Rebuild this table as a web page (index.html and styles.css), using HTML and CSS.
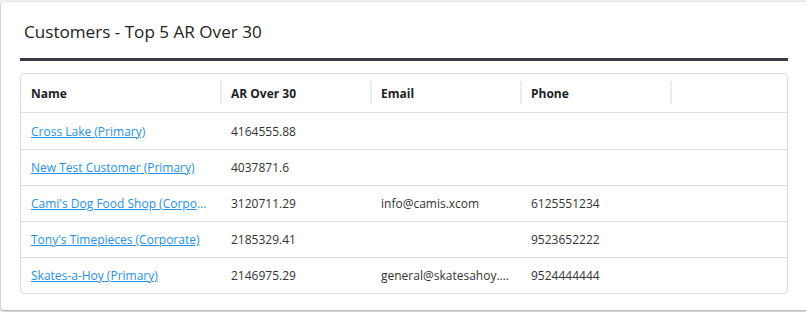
FILE: index.html
```html
<!DOCTYPE html>
<html lang="en">
<head>
<meta charset="utf-8">
<title>Customers - Top 5 AR Over 30</title>
<link rel="stylesheet" href="styles.css">
</head>
<body>
<div class="card">
  <div class="card-header">
    <h2 class="title">Customers - Top 5 AR Over 30</h2>
  </div>
  <div class="grid">
    <div class="row head">
      <div class="cell">Name</div>
      <div class="cell sep">AR Over 30</div>
      <div class="cell sep">Email</div>
      <div class="cell sep">Phone</div>
      <div class="cell sep"></div>
    </div>
    <div class="row first">
      <div class="cell"><a href="#" class="link">Cross Lake (Primary)</a></div>
      <div class="cell">4164555.88</div>
      <div class="cell"></div>
      <div class="cell"></div>
      <div class="cell"></div>
    </div>
    <div class="row">
      <div class="cell"><a href="#" class="link">New Test Customer (Primary)</a></div>
      <div class="cell">4037871.6</div>
      <div class="cell"></div>
      <div class="cell"></div>
      <div class="cell"></div>
    </div>
    <div class="row">
      <div class="cell"><a href="#" class="link">Cami's Dog Food Shop (Corporate)</a></div>
      <div class="cell">3120711.29</div>
      <div class="cell">info@camis.xcom</div>
      <div class="cell">6125551234</div>
      <div class="cell"></div>
    </div>
    <div class="row">
      <div class="cell"><a href="#" class="link">Tony's Timepieces (Corporate)</a></div>
      <div class="cell">2185329.41</div>
      <div class="cell"></div>
      <div class="cell">9523652222</div>
      <div class="cell"></div>
    </div>
    <div class="row last">
      <div class="cell"><a href="#" class="link">Skates-a-Hoy (Primary)</a></div>
      <div class="cell">2146975.29</div>
      <div class="cell">general@skatesahoy.com</div>
      <div class="cell">9524444444</div>
      <div class="cell"></div>
    </div>
  </div>
</div>
</body>
</html>
```

FILE: styles.css
```css
html, body {
  margin: 0;
  padding: 0;
}
body {
  background: #f1f1f1;
  font-family: "Open Sans", "Liberation Sans", sans-serif;
  overflow: hidden;
  width: 806px;
  height: 312px;
}
.card {
  margin: 2px 0 0 1px;
  width: 820px;
  box-sizing: border-box;
  padding: 18px 33px 16px 19px;
  background: #fff;
  border-radius: 4px;
  box-shadow: 0 1px 3px rgba(0, 0, 0, 0.35);
}
.card-header {
  border-bottom: 3px solid #3c3c46;
  padding: 0 0 14px 4px;
}
.title {
  margin: 0;
  font-size: 17.1px;
  line-height: 24px;
  font-weight: 400;
  color: #222;
}
.grid {
  margin-top: 12px;
  border: 1px solid #dedede;
  border-radius: 4px;
  overflow: hidden;
}
.row {
  display: grid;
  grid-template-columns: 199px 150px 150px 150px 1fr;
  height: 35px;
  border-bottom: 1px solid #dedede;
  font-size: 12px;
  color: #333;
}
.row.first {
  height: 36px;
}
.row.last {
  border-bottom: none;
}
.row.head {
  height: 38px;
  font-weight: 700;
  color: #1c1c28;
}
.cell {
  display: flex;
  align-items: center;
  min-width: 0;
  padding: 0 9px 0 11px;
  white-space: nowrap;
  overflow: hidden;
  text-overflow: ellipsis;
}
.cell:first-child {
  padding-left: 10px;
  padding-right: 12px;
}
.head .cell.sep {
  position: relative;
}
.head .cell.sep::before {
  content: "";
  position: absolute;
  left: 0;
  top: 7px;
  bottom: 8px;
  width: 2px;
  background: #ececec;
}
.link {
  color: #2592e8;
  text-decoration: underline;
  overflow: hidden;
  text-overflow: ellipsis;
  white-space: nowrap;
  display: block;
}
.row:not(.head) .cell:nth-child(3) {
  display: block;
  line-height: 35px;
}
```
